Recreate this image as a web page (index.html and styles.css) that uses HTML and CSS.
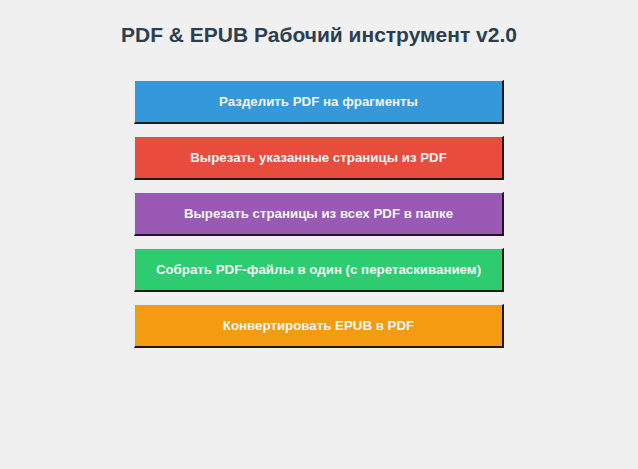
FILE: index.html
```html
<!DOCTYPE html>
<html lang="ru">
<head>
<meta charset="utf-8">
<title>PDF & EPUB Рабочий инструмент v2.0</title>
<link rel="stylesheet" href="styles.css">
</head>
<body>
<main class="app">
  <h1 class="title">PDF &amp; EPUB Рабочий инструмент v2.0</h1>
  <div class="actions">
    <button class="btn btn-blue">Разделить PDF на фрагменты</button>
    <button class="btn btn-red">Вырезать указанные страницы из PDF</button>
    <button class="btn btn-purple">Вырезать страницы из всех PDF в папке</button>
    <button class="btn btn-green">Собрать PDF-файлы в один (с перетаскиванием)</button>
    <button class="btn btn-orange">Конвертировать EPUB в PDF</button>
  </div>
</main>
</body>
</html>
```
FILE: styles.css
```css
html, body {
  margin: 0;
  padding: 0;
  background: #f0f0f0;
  height: 100%;
}
.app {
  display: flex;
  flex-direction: column;
  align-items: center;
  padding-top: 23px;
  font-family: "Liberation Sans", Arial, sans-serif;
}
.title {
  margin: 0;
  font-size: 21px;
  line-height: 24px;
  font-weight: bold;
  color: #2c3e50;
}
.actions {
  margin-top: 33px;
  display: flex;
  flex-direction: column;
  gap: 12px;
}
.btn {
  box-sizing: border-box;
  width: 370px;
  height: 44px;
  margin: 0;
  padding: 0;
  font-family: "Liberation Sans", Arial, sans-serif;
  font-size: 13.3px;
  font-weight: bold;
  color: #f3f5f6;
  border-style: solid;
  border-width: 1px 2px 2px 1px;
  border-color: #e6eef2 #1b1b1b #1b1b1b #e6eef2;
  cursor: pointer;
}
.btn-blue { background: #3498db; }
.btn-red { background: #e74c3c; }
.btn-purple { background: #9b59b6; }
.btn-green { background: #2ecc71; }
.btn-orange { background: #f39c12; }
```
